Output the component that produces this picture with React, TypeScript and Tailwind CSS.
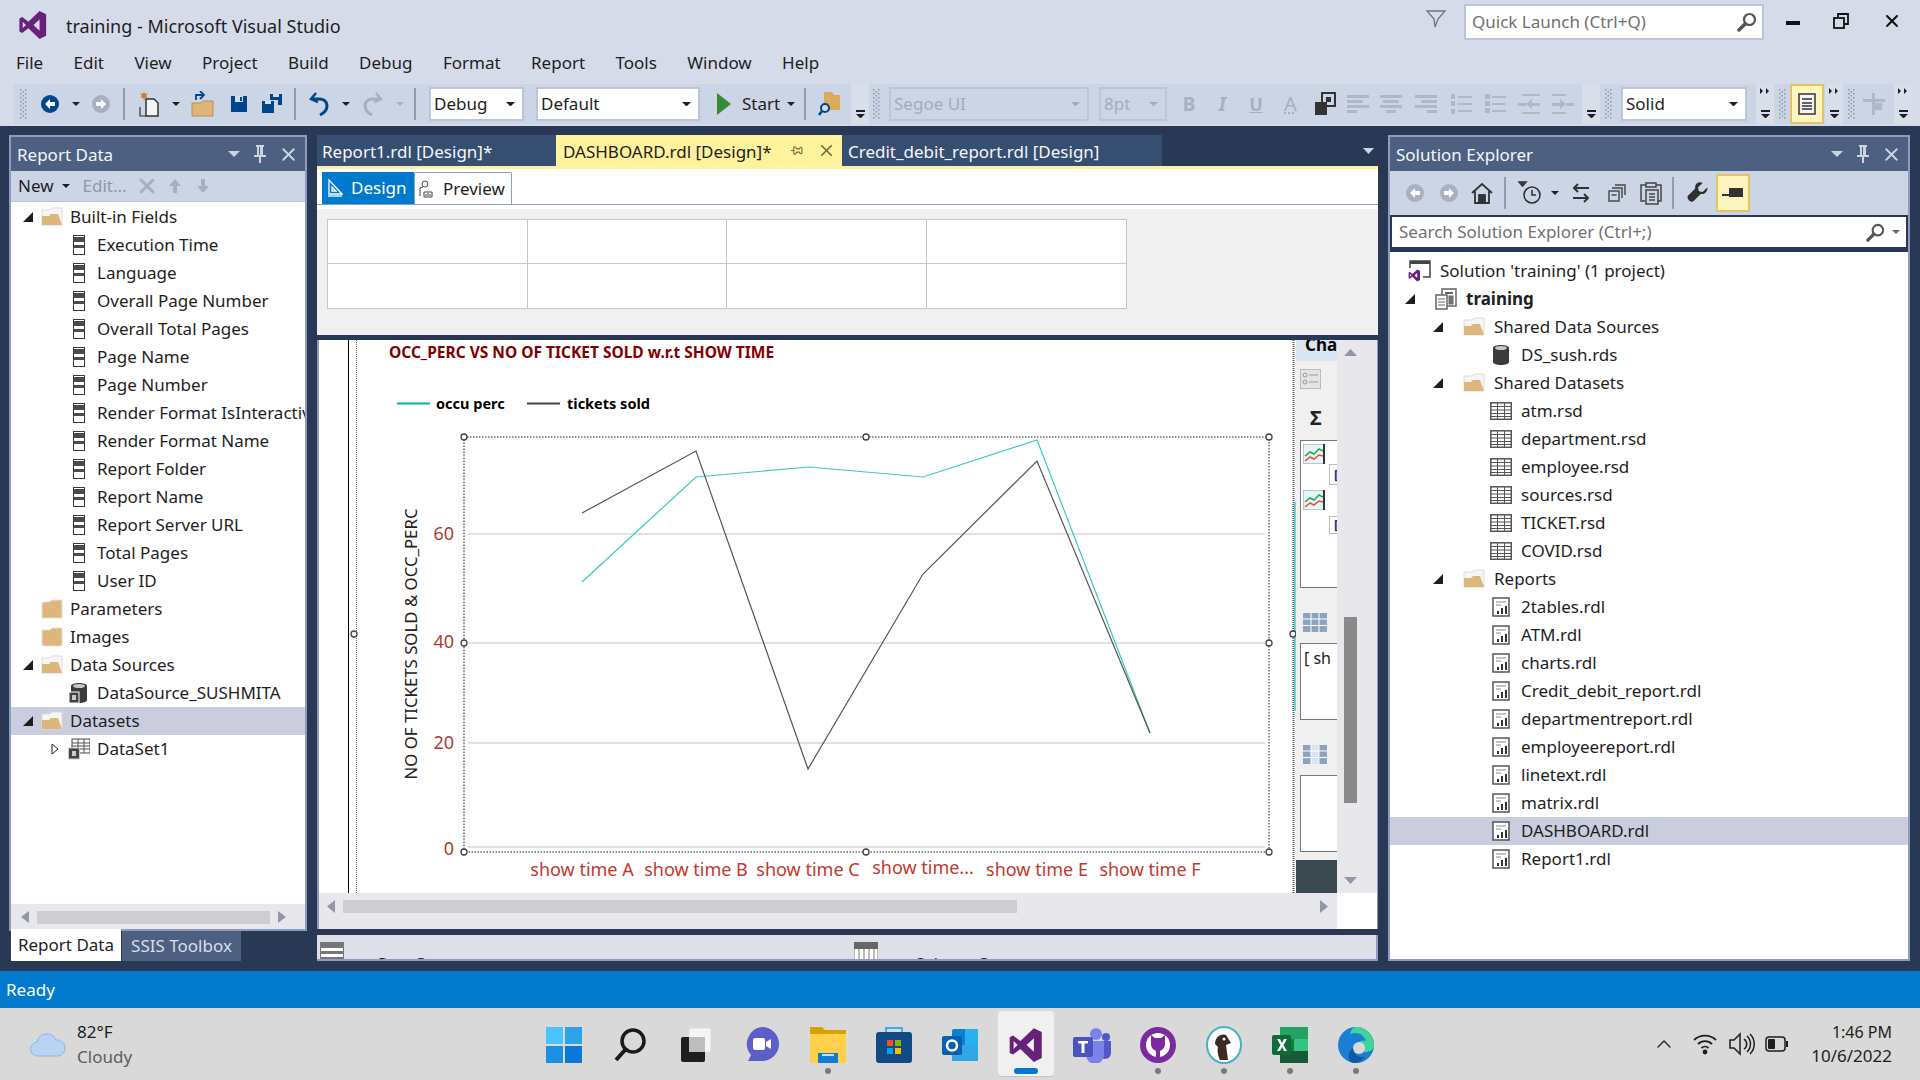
import type { ReactNode } from 'react'
import { X, Pin, ChevronUp } from 'lucide-react'

const font = '"Noto Sans", "Open Sans", sans-serif'

function Caret({ color = '#1e1e1e', size = 8 }: { color?: string; size?: number }) {
  return (
    <svg width={size} height={size / 2} viewBox="0 0 8 4" className="shrink-0">
      <path d="M0 0h8L4 4z" fill={color} />
    </svg>
  )
}

function Magnifier({ size = 20 }: { size?: number }) {
  return (
    <svg width={size} height={size} viewBox="0 0 20 20" fill="none" stroke="#555">
      <circle cx="12.500" cy="7.500" r="5.500" strokeWidth="2.200" />
      <path d="M8 12l-6 6" strokeWidth="3.500" strokeLinecap="round" />
    </svg>
  )
}

function Gripper() {
  return (
    <svg width="8" height="30" viewBox="0 0 8 30" className="shrink-0">
      {[0, 4, 8, 12, 16, 20, 24, 28].map((y) => (
        <g key={y} fill="#8f98ab">
          <rect x="0" y={y} width="1.5" height="1.5" />
          <rect x="5" y={y} width="1.5" height="1.5" />
          <rect x="2.5" y={y + 2} width="1.5" height="1.5" />
        </g>
      ))}
    </svg>
  )
}

function Sep() {
  return <div className="w-[2px] h-[32px] bg-[#8f9bb3] shrink-0" />
}

function Overflow({ double }: { double?: boolean }) {
  return (
    <div className="w-[18px] h-[40px] flex flex-col items-center justify-end pb-[6px] gap-[2px] bg-[#d9deeb] shrink-0">
      {double && (
        <svg width="10" height="6" viewBox="0 0 10 6" className="mb-[14px]">
          <path d="M0 0l3 3-3 3zM6 0l3 3-3 3z" fill="#1e1e1e" />
        </svg>
      )}
      <div className="w-[9px] h-[2px] bg-[#1e1e1e]" />
      <Caret size={9} />
    </div>
  )
}

function Combo({ label, width, disabled }: { label: string; width: string; disabled?: boolean }) {
  return (
    <div
      className={`${width} h-[34px] shrink-0 flex items-center justify-between pl-[3px] pr-[7px] border-2 text-[17px] ${
        disabled ? 'border-[#bcc5d8] bg-[#ccd5e6] text-[#a3abbd]' : 'border-[#bcc5d8] bg-white text-[#1e1e1e]'
      }`}
    >
      <span>{label}</span>
      <Caret color={disabled ? '#a3abbd' : '#1e1e1e'} size={9} />
    </div>
  )
}

function VsLogo({ size = 30, color = '#68217a' }: { size?: number; color?: string }) {
  return (
    <svg width={size} height={size} viewBox="0 0 32 32">
      <path
        fillRule="evenodd"
        d="M23 1l7 3.5v23L23 31 11 19.5 4.5 24.5 1.5 23V9l3-1.500 6.500 5zM23 10l-6.500 6 6.500 6zM5 12.500v7l3.500-3.500z"
        fill={color}
      />
    </svg>
  )
}

function CircleArrow({ dir, color }: { dir: 'l' | 'r'; color: string }) {
  return (
    <svg width="18" height="18" viewBox="0 0 18 18">
      <circle cx="9" cy="9" r="9" fill={color} />
      <path d={dir === 'l' ? 'M9 4L4 9l5 5v-3h5V7H9z' : 'M9 4l5 5-5 5v-3H4V7h5z'} fill="#fff" />
    </svg>
  )
}

function SaveIcon({ all }: { all?: boolean }) {
  return (
    <svg width="22" height="20" viewBox="0 0 22 20">
      {all ? (
        <>
          <path d="M9 0h12v11h-4V6H9z" fill="#00468c" />
          <path d="M1 7h12v12H1z" fill="#00468c" />
          <rect x="4" y="7" width="6" height="3" fill="#d6dbe9" />
          <rect x="12" y="0" width="6" height="3" fill="#d6dbe9" />
        </>
      ) : (
        <>
          <path d="M3 2h16v16H3z" fill="#00468c" />
          <rect x="7" y="2" width="8" height="6" fill="#d6dbe9" />
          <rect x="12" y="3" width="2" height="4" fill="#00468c" />
        </>
      )}
    </svg>
  )
}

function Lines({ kind }: { kind: string }) {
  const rows: Record<string, number[][]> = {
    left: [[0, 22], [0, 16], [0, 22], [0, 10]],
    center: [[0, 22], [3, 16], [0, 22], [6, 10]],
    right: [[0, 22], [6, 16], [0, 22], [12, 10]],
  }
  return (
    <svg width="22" height="22" viewBox="0 0 22 22">
      {rows[kind].map(([x, w], i) => (
        <rect key={i} x={x} y={2 + i * 5} width={w} height="3" fill="#b0b7c6" />
      ))}
    </svg>
  )
}

function Slot({ w, children }: { w: string; children?: ReactNode }) {
  return <div className={`${w} h-[40px] shrink-0 flex items-center justify-center`}>{children}</div>
}

function FormatButtons() {
  return (
    <>
      <Slot w="w-[5px]" />
      <Slot w="w-[34px]"><span className="font-bold text-[19px] text-[#a8afbf]">B</span></Slot>
      <Slot w="w-[33px]"><span className="italic font-bold text-[19px] text-[#a8afbf]">I</span></Slot>
      <Slot w="w-[34px]"><span className="underline font-bold text-[18px] text-[#a8afbf]">U</span></Slot>
      <Slot w="w-[35px]"><span className="underline decoration-dotted text-[20px] text-[#a8afbf]">A</span></Slot>
      <Slot w="w-[33px]">
        <svg width="22" height="24" viewBox="0 0 22 24">
          <rect x="8" y="1" width="13" height="13" fill="none" stroke="#333" strokeWidth="2" />
          <rect x="12" y="5" width="5" height="5" fill="#333" />
          <rect x="1" y="10" width="12" height="13" fill="#333" />
        </svg>
      </Slot>
      <Slot w="w-[33px]"><Lines kind="left" /></Slot>
      <Slot w="w-[34px]"><Lines kind="center" /></Slot>
      <Slot w="w-[36px]"><Lines kind="right" /></Slot>
      <Slot w="w-[34px]">
        <svg width="22" height="22" viewBox="0 0 22 22" fill="#b0b7c6">
          <rect x="8" y="3" width="14" height="2" /><rect x="8" y="10" width="14" height="2" /><rect x="8" y="17" width="14" height="2" />
          <rect x="1" y="1" width="4" height="5" /><rect x="1" y="8" width="4" height="5" /><rect x="1" y="16" width="4" height="5" />
        </svg>
      </Slot>
      <Slot w="w-[34px]">
        <svg width="22" height="22" viewBox="0 0 22 22" fill="#b0b7c6">
          <rect x="8" y="3" width="14" height="2" /><rect x="8" y="10" width="14" height="2" /><rect x="8" y="17" width="14" height="2" />
          <rect x="1" y="1" width="5" height="5" /><rect x="1" y="8" width="5" height="5" /><rect x="1" y="15" width="5" height="5" />
        </svg>
      </Slot>
      <Slot w="w-[34px]">
        <svg width="22" height="22" viewBox="0 0 22 22" fill="#b0b7c6">
          <rect x="4" y="1" width="18" height="2" /><rect x="0" y="10" width="8" height="3" /><rect x="14" y="10" width="8" height="3" />
          <rect x="4" y="19" width="18" height="2" /><path d="M8 11l6-5v10z" />
        </svg>
      </Slot>
      <Slot w="w-[34px]">
        <svg width="22" height="22" viewBox="0 0 22 22" fill="#b0b7c6">
          <rect x="0" y="1" width="14" height="2" /><rect x="0" y="10" width="8" height="3" /><rect x="14" y="10" width="8" height="3" />
          <rect x="0" y="19" width="14" height="2" /><path d="M14 11L8 6v10z" />
        </svg>
      </Slot>
    </>
  )
}

function Toolbar() {
  return (
    <div className="h-[40px] mt-[1px] flex items-center bg-[#ccd5e6] ml-[14px] mr-[9px]">
      <Slot w="w-[19px]"><Gripper /></Slot>
      <Slot w="w-[33px]"><CircleArrow dir="l" color="#00468c" /></Slot>
      <Slot w="w-[20px]"><Caret /></Slot>
      <Slot w="w-[30px]"><CircleArrow dir="r" color="#a8afbf" /></Slot>
      <Slot w="w-[16px]"><Sep /></Slot>
      <Slot w="w-[36px]">
        <svg width="22" height="26" viewBox="0 0 22 26">
          <path d="M7 8h8l4 4v13H7z" fill="#f3f4f7" stroke="#333" strokeWidth="1.500" />
          <path d="M1 16v9h6" fill="none" stroke="#333" strokeWidth="1.200" />
          <path d="M5 0l1 3 3-1-2 3 2 2-3-.500L5 10 4 6.500 1 7l2-2-2-3 3 1z" fill="#c27d1a" />
        </svg>
      </Slot>
      <Slot w="w-[16px]"><Caret /></Slot>
      <Slot w="w-[38px]">
        <svg width="24" height="26" viewBox="0 0 24 26">
          <path d="M1 12h9l2-2h10v15H1z" fill="#dcb67a" stroke="#b5914f" />
          <path d="M5 9V4h7M9 0l4 4-4 4" fill="none" stroke="#00468c" strokeWidth="1.800" />
        </svg>
      </Slot>
      <Slot w="w-[33px]"><SaveIcon /></Slot>
      <Slot w="w-[34px]"><SaveIcon all /></Slot>
      <Slot w="w-[12px]"><Sep /></Slot>
      <Slot w="w-[36px]">
        <svg width="22" height="26" viewBox="0 0 22 26" fill="none">
          <path d="M8 2L3 8l7 3" stroke="#00468c" strokeWidth="2.500" />
          <path d="M4 8h7c6 0 8 4 8 7 0 4-3 7-7 9" stroke="#00468c" strokeWidth="3" />
        </svg>
      </Slot>
      <Slot w="w-[18px]"><Caret /></Slot>
      <Slot w="w-[36px]">
        <svg width="22" height="26" viewBox="0 0 22 26" fill="none">
          <path d="M14 2l5 6-7 3" stroke="#a8afbf" strokeWidth="2.500" />
          <path d="M18 8h-7c-6 0-8 4-8 7 0 4 3 7 7 9" stroke="#a8afbf" strokeWidth="3" />
        </svg>
      </Slot>
      <Slot w="w-[18px]"><Caret color="#a8afbf" /></Slot>
      <Slot w="w-[11px]"><Sep /></Slot>
      <Slot w="w-[9px]" />
      <Combo label="Debug" width="w-[95px]" />
      <Slot w="w-[12px]" />
      <Combo label="Default" width="w-[164px]" />
      <Slot w="w-[12px]" />
      <Slot w="w-[24px]">
        <svg width="14" height="22" viewBox="0 0 14 22"><path d="M0 0l14 11L0 22z" fill="#388a34" /></svg>
      </Slot>
      <div className="w-[44px] text-[17px] text-[#1e1e1e] shrink-0 pl-[6px]">Start</div>
      <Slot w="w-[22px]"><Caret /></Slot>
      <Slot w="w-[6px]"><Sep /></Slot>
      <Slot w="w-[43px]">
        <svg width="24" height="26" viewBox="0 0 24 26">
          <path d="M6 1h8l2 3h6v15H6z" fill="#dcaa5b" />
          <circle cx="7" cy="17" r="4" fill="#d6dbe9" stroke="#00468c" strokeWidth="2" />
          <path d="M4 20l-3 4" stroke="#00468c" strokeWidth="2.500" />
        </svg>
      </Slot>
      <Overflow />
      <Slot w="w-[4px]" />
      <Gripper />
      <Slot w="w-[8px]" />
      <Combo label="Segoe UI" width="w-[200px]" disabled />
      <Slot w="w-[10px]" />
      <Combo label="8pt" width="w-[68px]" disabled />
      <FormatButtons />
      <Slot w="w-[2px]" />
      <Overflow />
      <Slot w="w-[5px]" />
      <Gripper />
      <Slot w="w-[8px]" />
      <Combo label="Solid" width="w-[126px]" />
      <Slot w="w-[9px]" />
      <Overflow double />
      <Slot w="w-[5px]" />
      <Gripper />
      <div className="w-[34px] h-[40px] ml-[3px] border-2 border-[#e5c365] bg-[#fdf4bf] flex items-center justify-center shrink-0">
        <svg width="18" height="22" viewBox="0 0 18 22" fill="none" stroke="#333" strokeWidth="1.500">
          <rect x="1" y="1" width="16" height="20" fill="#f5f5f5" />
          <path d="M4 6h10M4 10h10M4 13h10M4 16h10" />
        </svg>
      </div>
      <div className="w-[1px] shrink-0" />
      <Overflow double />
      <Slot w="w-[5px]" />
      <Gripper />
      <Slot w="w-[36px]">
        <svg width="22" height="22" viewBox="0 0 22 22" fill="#b0b7c6">
          <rect x="0" y="6" width="22" height="3" /><rect x="9" y="0" width="3" height="22" /><rect x="12" y="10" width="7" height="7" />
        </svg>
      </Slot>
      <Slot w="w-[2px]" />
      <Overflow double />
    </div>
  )
}

function FolderOpen() {
  return (
    <svg width="22" height="20" viewBox="0 0 22 20">
      <path d="M1 3h8l2-2h10v17H1z" fill="#f6f6f6" stroke="#e0dccf" />
      <path d="M1 18V9h7l2-2h7l4 11z" fill="#dcb67a" />
    </svg>
  )
}

function FolderClosed() {
  return (
    <svg width="22" height="20" viewBox="0 0 22 20">
      <path d="M1 3h8l2-2h10v18H1z" fill="#dcb67a" stroke="#e8e3d6" />
    </svg>
  )
}

function FieldIcon() {
  return (
    <svg width="12" height="20" viewBox="0 0 12 20">
      <rect x="0.500" y="0.500" width="11" height="19" fill="#fff" stroke="#3b3b3b" />
      <rect x="1" y="2" width="10" height="5" fill="#4b4b4b" />
      <rect x="1" y="10" width="10" height="3" fill="#4b4b4b" />
    </svg>
  )
}

function DbIcon({ small }: { small?: boolean }) {
  return (
    <svg width="20" height="22" viewBox="0 0 20 22">
      <path d="M2 4c0-4 16-4 16 0v14c0 4-16 4-16 0z" fill="#3b3b3b" />
      <ellipse cx="10" cy="4" rx="6" ry="2" fill="#c9c9c9" />
      {small && <rect x="0" y="10" width="10" height="11" fill="#424242" stroke="#fff" />}
      {small && <rect x="3" y="13" width="4" height="5" fill="#c9c9c9" />}
    </svg>
  )
}

function GridIcon() {
  return (
    <svg width="22" height="18" viewBox="0 0 22 18" fill="none" stroke="#555">
      <rect x="0.800" y="0.800" width="20.500" height="16.500" strokeWidth="1.500" fill="#fff" />
      <path d="M1 4.500h20M1 8h20M1 11.500h20M1 14.500h20M7.500 1v16M14.500 1v16" strokeWidth="1" />
    </svg>
  )
}

function DatasetIcon() {
  return (
    <svg width="22" height="22" viewBox="0 0 22 22">
      <rect x="4" y="1" width="18" height="14" fill="#fff" stroke="#444" />
      <path d="M4 5h18M4 8h18M4 11h18M10 1v14M16 1v14" stroke="#555" />
      <rect x="0.500" y="10" width="11" height="11" fill="#444" stroke="#ccc" />
      <rect x="4" y="13" width="4" height="5" fill="#ccc" />
    </svg>
  )
}

function ReportIcon() {
  return (
    <svg width="18" height="20" viewBox="0 0 18 20">
      <rect x="1" y="1" width="16" height="18" fill="#fff" stroke="#555" strokeWidth="1.500" />
      <path d="M4 5h10M4 8h5" stroke="#888" />
      <rect x="5" y="14" width="2" height="3" fill="#333" />
      <rect x="9" y="11" width="2" height="6" fill="#333" />
      <rect x="13" y="9" width="2" height="8" fill="#333" />
    </svg>
  )
}

function ProjectIcon() {
  return (
    <svg width="22" height="22" viewBox="0 0 22 22" fill="#fff" stroke="#666">
      <rect x="7" y="1" width="14" height="17" strokeWidth="1.500" />
      <path d="M10 5h8" strokeWidth="2" />
      <rect x="14" y="8" width="4" height="8" fill="#777" />
      <rect x="1" y="7" width="11" height="14" strokeWidth="1.500" />
      <path d="M3 11h7M3 14h7M3 17h7" />
    </svg>
  )
}

function SolutionIcon() {
  return (
    <svg width="24" height="22" viewBox="0 0 24 22">
      <path d="M2 8V1h20v16h-7" fill="none" stroke="#444" strokeWidth="1.500" />
      <rect x="2" y="1" width="20" height="3" fill="#444" />
      <g transform="translate(0 9) scale(0.400)"><path fillRule="evenodd" d="M23 1l7 3.500v23L23 31 11 19.500 4.500 24.500 1.500 23V9l3-1.500 6.500 5zM23 10l-6.500 6 6.500 6zM5 12.500v7l3.500-3.500z" fill="#68217a" /></g>
    </svg>
  )
}

function Expand({ open, hollow }: { open?: boolean; hollow?: boolean }) {
  if (open) {
    return (
      <svg width="10" height="10" viewBox="0 0 10 10"><path d="M10 0v10H0z" fill="#1e1e1e" /></svg>
    )
  }
  if (hollow) {
    return (
      <svg width="8" height="12" viewBox="0 0 8 12"><path d="M1 1l6 5-6 5z" fill="#fff" stroke="#1e1e1e" /></svg>
    )
  }
  return null
}

function LeftRow({ indent, open, hollow, icon, label, selected }: {
  indent: string; open?: boolean; hollow?: boolean; icon: ReactNode; label: string; selected?: boolean
}) {
  return (
    <div className={`${indent} h-[28px] flex items-center text-[17px] text-[#1e1e1e] whitespace-nowrap ${selected ? 'bg-[#c9cdde]' : ''}`}>
      <div className="w-[12px] flex justify-center shrink-0"><Expand open={open} hollow={hollow} /></div>
      <div className="w-[36px] flex justify-center shrink-0">{icon}</div>
      <span>{label}</span>
    </div>
  )
}

function RightRow({ indent, open, icon, label, selected, bold }: {
  indent: string; open?: boolean; icon: ReactNode; label: string; selected?: boolean; bold?: boolean
}) {
  return (
    <div className={`${indent} h-[28px] flex items-center text-[17px] text-[#1e1e1e] whitespace-nowrap ${selected ? 'bg-[#c9cdde]' : ''} ${bold ? 'font-bold' : ''}`}>
      <div className="w-[12px] flex justify-center shrink-0"><Expand open={open} /></div>
      <div className="w-[10px] shrink-0" />
      <div className="w-[40px] flex justify-center shrink-0">{icon}</div>
      <span>{label}</span>
    </div>
  )
}

function PanelTitle({ title }: { title: string }) {
  return (
    <div className="h-[34px] bg-[#4d6082] flex items-center text-[#f4f6fa] text-[17px] pl-[6px] shrink-0">
      <span className="flex-1 pt-[2px]">{title}</span>
      <svg width="12" height="6" viewBox="0 0 12 6" className="mr-[14px]"><path d="M0 0h12L6 6z" fill="#ced4dd" /></svg>
      <svg width="12" height="18" viewBox="0 0 12 18" fill="#ced4dd" className="mr-[12px]">
        <path d="M2 0h8v2H9v8h3v2H7v6H5v-6H0v-2h3V2H2zM5 2v8h1V2z" fillRule="evenodd" />
      </svg>
      <X size={21} strokeWidth={2.200} className="text-[#ced4dd] mr-[6px]" />
    </div>
  )
}

const fields = [
  'Execution Time', 'Language', 'Overall Page Number', 'Overall Total Pages', 'Page Name', 'Page Number',
  'Render Format IsInteractive', 'Render Format Name', 'Report Folder', 'Report Name', 'Report Server URL',
  'Total Pages', 'User ID',
]

function ReportDataPanel() {
  return (
    <div className="w-[298px] shrink-0 flex flex-col">
      <div className="flex-1 min-h-0 border-x-2 border-t-2 border-[#8e9bbc] flex flex-col">
        <PanelTitle title="Report Data" />
        <div className="h-[31px] bg-[#ccd5e6] flex items-center shrink-0 text-[17px] border-b border-[#b9c3d6]">
          <span className="ml-[7px] text-[#1e1e1e]">New</span>
          <span className="ml-[8px]"><Caret size={8} /></span>
          <span className="ml-[13px] text-[#8f97a8]">Edit...</span>
          <X size={24} strokeWidth={3} className="text-[#a8afbf] ml-[8px]" />
          <svg width="14" height="16" viewBox="0 0 14 16" className="ml-[9px]"><path d="M7 1L1 8h4v7h4V8h4z" fill="#a8afbf" /></svg>
          <svg width="14" height="16" viewBox="0 0 14 16" className="ml-[14px]"><path d="M7 15L1 8h4V1h4v7h4z" fill="#a8afbf" /></svg>
        </div>
        <div className="flex-1 bg-white overflow-hidden pt-[1px]">
          <LeftRow indent="pl-[11px]" open icon={<FolderOpen />} label="Built-in Fields" />
          {fields.map((f) => (
            <LeftRow key={f} indent="pl-[38px]" icon={<FieldIcon />} label={f} />
          ))}
          <LeftRow indent="pl-[11px]" icon={<FolderClosed />} label="Parameters" />
          <LeftRow indent="pl-[11px]" icon={<FolderClosed />} label="Images" />
          <LeftRow indent="pl-[11px]" open icon={<FolderOpen />} label="Data Sources" />
          <LeftRow indent="pl-[38px]" icon={<DbIcon small />} label="DataSource_SUSHMITA" />
          <LeftRow indent="pl-[11px]" open icon={<FolderOpen />} label="Datasets" selected />
          <LeftRow indent="pl-[38px]" hollow icon={<DatasetIcon />} label="DataSet1" />
        </div>
        <div className="h-[26px] bg-[#e8e8ec] flex items-center shrink-0 px-[10px] gap-[8px]">
          <svg width="8" height="12" viewBox="0 0 8 12"><path d="M8 0v12L0 6z" fill="#9097a8" /></svg>
          <div className="w-[233px] h-[13px] bg-[#cdced3]" />
          <svg width="8" height="12" viewBox="0 0 8 12"><path d="M0 0v12l8-6z" fill="#9097a8" /></svg>
        </div>
      </div>
      <div className="h-[32px] flex shrink-0 text-[17px] border-t-2 border-[#8e9bbc] -mt-[1px]">
        <div className="ml-[2px] w-[110px] bg-white text-[#1e1e1e] flex items-center justify-center -mt-[2px] h-[32px]">Report Data</div>
        <div className="ml-[1px] w-[119px] bg-[#4d6082] text-[#d8dfea] flex items-center justify-center">SSIS Toolbox</div>
      </div>
    </div>
  )
}

function SolutionToolbar() {
  return (
    <div className="h-[44px] bg-[#ccd5e6] flex items-center shrink-0">
      <div className="w-[8px]" />
      <Slot w="w-[34px]"><CircleArrow dir="l" color="#a8afbf" /></Slot>
      <Slot w="w-[34px]"><CircleArrow dir="r" color="#a8afbf" /></Slot>
      <Slot w="w-[32px]">
        <svg width="22" height="22" viewBox="0 0 22 22" fill="none" stroke="#333" strokeWidth="1.800">
          <path d="M1 11L11 2l10 9M4 9v12h14V9" /><rect x="8" y="13" width="6" height="8" fill="#333" />
        </svg>
      </Slot>
      <Slot w="w-[14px]"><div className="w-[2px] h-[32px] bg-[#8f9bb3]" /></Slot>
      <Slot w="w-[36px]">
        <svg width="24" height="24" viewBox="0 0 24 24" fill="none" stroke="#333" strokeWidth="1.600">
          <path d="M1 1h7L4.500 5z" fill="#444" /><circle cx="14" cy="14" r="8" /><path d="M14 9v5h4" />
        </svg>
      </Slot>
      <Slot w="w-[14px]"><Caret /></Slot>
      <Slot w="w-[38px]">
        <svg width="20" height="20" viewBox="0 0 20 20" fill="none" stroke="#333" strokeWidth="2">
          <path d="M18 5H3M7 1L3 5l4 4M2 15h15M13 11l4 4-4 4" />
        </svg>
      </Slot>
      <Slot w="w-[34px]">
        <svg width="18" height="18" viewBox="0 0 18 18" fill="none" stroke="#444" strokeWidth="1.400">
          <rect x="1" y="7" width="10" height="10" /><path d="M3.500 11h5" /><path d="M4 4h10v10M7 1h10v10" />
        </svg>
      </Slot>
      <Slot w="w-[33px]">
        <svg width="22" height="24" viewBox="0 0 22 24" fill="none" stroke="#444" strokeWidth="1.500">
          <path d="M5 20H1V4h5M16 4h5v16h-4" /><rect x="6" y="2" width="10" height="4" /><rect x="6" y="9" width="12" height="14" /><path d="M9 13h6M9 16h6M9 19h6" />
        </svg>
      </Slot>
      <Slot w="w-[12px]"><div className="w-[2px] h-[32px] bg-[#8f9bb3]" /></Slot>
      <div className="w-[37px] h-[40px] flex items-center justify-center shrink-0">
        <svg width="22" height="22" viewBox="0 0 24 24"><path d="M22 6l-5 5-4-1-1-4 5-5c-4-2-9 1-8 6L1 15c-2 3 3 8 6 6l8-8c5 1 8-4 7-7z" fill="#2f2f2f" /></svg>
      </div>
      <div className="w-[34px] h-[38px] border-2 border-[#e5c365] bg-[#fdf4bf] flex items-center justify-center shrink-0">
        <svg width="24" height="12" viewBox="0 0 24 12"><rect x="8" y="1" width="14" height="9" fill="#333" /><rect x="1" y="7" width="8" height="2" fill="#333" /></svg>
      </div>
    </div>
  )
}

const datasets = ['atm.rsd', 'department.rsd', 'employee.rsd', 'sources.rsd', 'TICKET.rsd', 'COVID.rsd']
const reports = [
  '2tables.rdl', 'ATM.rdl', 'charts.rdl', 'Credit_debit_report.rdl', 'departmentreport.rdl', 'employeereport.rdl',
  'linetext.rdl', 'matrix.rdl', 'DASHBOARD.rdl', 'Report1.rdl',
]

function SolutionPanel() {
  return (
    <div className="w-[522px] shrink-0 border-x-2 border-y-2 border-[#8e9bbc] flex flex-col">
      <PanelTitle title="Solution Explorer" />
      <SolutionToolbar />
      <div className="h-[30px] mt-[2px] mx-[2px] mb-[5px] bg-white flex items-center text-[17px] text-[#717171] pl-[7px] pr-[6px] shrink-0">
        <span className="flex-1">Search Solution Explorer (Ctrl+;)</span>
        <span className="mr-[7px]"><Magnifier size={19} /></span>
        <Caret color="#666" size={8} />
      </div>
      <div className="flex-1 bg-white overflow-hidden pt-[5px]">
        <div className="h-[28px] flex items-center text-[17px] text-[#1e1e1e]">
          <div className="w-[50px] flex justify-end pr-[8px]"><SolutionIcon /></div>
          <span>Solution 'training' (1 project)</span>
        </div>
        <RightRow indent="pl-[14px]" open bold icon={<ProjectIcon />} label="training" />
        <RightRow indent="pl-[42px]" open icon={<FolderOpen />} label="Shared Data Sources" />
        <RightRow indent="pl-[69px]" icon={<DbIcon />} label="DS_sush.rds" />
        <RightRow indent="pl-[42px]" open icon={<FolderOpen />} label="Shared Datasets" />
        {datasets.map((d) => <RightRow key={d} indent="pl-[69px]" icon={<GridIcon />} label={d} />)}
        <RightRow indent="pl-[42px]" open icon={<FolderOpen />} label="Reports" />
        {reports.map((r) => (
          <RightRow key={r} indent="pl-[69px]" icon={<ReportIcon />} label={r} selected={r === 'DASHBOARD.rdl'} />
        ))}
      </div>
    </div>
  )
}

const gray = '583,513 697,451 809,769 924,574 1038,461 1151,733'
const teal = '583,582 697,477 810,467 924,477 1038,440 1151,733'
const xLabels = [
  { x: 583, y: 876, t: 'show time A' },
  { x: 697, y: 876, t: 'show time B' },
  { x: 809, y: 876, t: 'show time C' },
  { x: 924, y: 874, t: 'show  time...' },
  { x: 1038, y: 876, t: 'show time E' },
  { x: 1151, y: 876, t: 'show time F' },
]

function Chart() {
  const handles = [[465, 437], [867, 437], [1270, 437], [465, 643], [1270, 643], [465, 852], [867, 852], [1270, 852], [355, 634], [1294, 634]]
  return (
    <svg viewBox="320 340 977 553" width="977" height="553" className="block shrink-0" style={{ fontFamily: font }}>
      <rect x="320" y="340" width="977" height="553" fill="#fff" />
      <line x1="349.500" y1="340" x2="349.500" y2="893" stroke="#000" />
      <line x1="357.500" y1="340" x2="357.500" y2="893" stroke="#666" strokeDasharray="1 1" />
      <line x1="1294.500" y1="340" x2="1294.500" y2="893" stroke="#555" strokeWidth="2" strokeDasharray="1 1" />
      <line x1="1296" y1="502" x2="1296" y2="711" stroke="#3cc" strokeWidth="1.500" />
      <text x="390" y="358" fontSize="15.500" fontWeight="700" fill="#800000">OCC_PERC VS NO OF TICKET SOLD w.r.t SHOW TIME</text>
      <line x1="398" y1="403.500" x2="431" y2="403.500" stroke="#00b5ad" strokeWidth="2" />
      <text x="437" y="409" fontSize="14.500" fontWeight="700" fill="#000">occu perc</text>
      <line x1="528" y1="403.500" x2="561" y2="403.500" stroke="#444" strokeWidth="2" />
      <text x="568" y="409" fontSize="14.500" fontWeight="700" fill="#000">tickets sold</text>
      <text transform="translate(418 644) rotate(-90)" textAnchor="middle" fontSize="16.800" fill="#222">NO OF TICKETS SOLD &amp; OCC_PERC</text>
      {[534, 643, 743, 847].map((y) => (
        <line key={y} x1="469" y1={y} x2="1266" y2={y} stroke="#e2e2e2" strokeWidth="2" />
      ))}
      {[[60, 540], [40, 648], [20, 749], [0, 855]].map(([v, y]) => (
        <text key={v} x="455" y={y} textAnchor="end" fontSize="18" fill="#b03a2e">{v}</text>
      ))}
      <rect x="465" y="437" width="805" height="415" fill="none" stroke="#666" strokeWidth="1.500" strokeDasharray="1.500 1.500" />
      <polyline points={teal} fill="none" stroke="#3ac8c0" strokeWidth="1.200" />
      <polyline points={gray} fill="none" stroke="#555" strokeWidth="1.200" />
      {handles.map(([x, y]) => (
        <circle key={`${x}-${y}`} cx={x} cy={y} r="3" fill="#fff" stroke="#444" strokeWidth="1.300" />
      ))}
      {xLabels.map((l) => (
        <text key={l.x} x={l.x} y={l.y} textAnchor="middle" fontSize="18" fill="#c0392b">{l.t}</text>
      ))}
    </svg>
  )
}

function LineChip() {
  return (
    <svg width="22" height="20" viewBox="0 0 22 20" className="shrink-0">
      <rect x="0" y="0" width="22" height="20" fill="#e6f4fb" stroke="#999" />
      <path d="M2 12l5-4 4 2 5-5 4 2" fill="none" stroke="#2aa84a" strokeWidth="1.500" />
      <path d="M2 17l5-4 4 2 5-4 4 1" fill="none" stroke="#e0553a" strokeWidth="1.500" />
      <rect x="20" y="0" width="2" height="20" fill="#333" />
    </svg>
  )
}

function GroupIcon({ middle }: { middle?: boolean }) {
  return (
    <svg width="24" height="19" viewBox="0 0 24 19">
      <rect width="24" height="19" fill="#8aa3bf" />
      <path d="M0 6h24M0 12.500h24M8 0v19M16 0v19" stroke="#fff" />
      {middle && <rect x="8" y="0" width="8" height="19" fill="#fff" opacity="0.700" />}
    </svg>
  )
}

function ChartDataPane() {
  return (
    <div className="w-[41px] shrink-0 overflow-hidden bg-[#f0f0f0] flex flex-col">
      <div className="h-[21px] bg-[#d8e6f2] text-[17px] font-bold text-black leading-[9px] pl-[9px] whitespace-nowrap shrink-0">Cha</div>
      <div className="h-[35px] flex items-center pl-[4px] shrink-0">
        <svg width="21" height="20" viewBox="0 0 21 20" className="shrink-0">
          <rect x="0.500" y="0.500" width="20" height="19" fill="#e4e4e4" stroke="#bbb" />
          <circle cx="5" cy="6" r="2" fill="none" stroke="#999" />
          <circle cx="5" cy="13" r="2" fill="none" stroke="#999" />
          <path d="M9 6h9M9 13h9" stroke="#999" />
        </svg>
      </div>
      <div className="h-[44px] pl-[14px] flex items-center text-[20px] font-bold text-[#222] shrink-0">Σ</div>
      <div className="h-[148px] ml-[4px] border border-[#777] bg-white pt-[3px] pl-[2px] w-[60px] shrink-0">
        <LineChip />
        <div className="h-[21px] w-[20px] ml-[26px] border border-[#bbb] bg-white text-[13px] leading-[18px] pl-[4px] text-[#1c2a6b] font-bold">[</div>
        <div className="h-[5px]" />
        <LineChip />
        <div className="h-[6px]" />
        <div className="h-[18px] w-[20px] ml-[26px] border border-[#bbb] bg-white text-[13px] leading-[15px] pl-[4px] text-[#1c2a6b] font-bold">[</div>
      </div>
      <div className="h-[55px] pl-[7px] pb-[11px] flex items-end shrink-0"><GroupIcon /></div>
      <div className="h-[77px] ml-[4px] border border-[#777] bg-white w-[60px] shrink-0 text-[16px] pl-[3px] pt-[2px] text-[#222] whitespace-nowrap">[ sh</div>
      <div className="h-[55px] pl-[7px] pb-[11px] flex items-end shrink-0"><GroupIcon middle /></div>
      <div className="h-[77px] ml-[4px] border border-[#777] bg-white w-[60px] shrink-0" />
      <div className="flex-1 mt-[8px] bg-[#3b4a50]" />
    </div>
  )
}

function DocumentPanel() {
  return (
    <div className="w-[1061px] shrink-0 flex flex-col">
      <div className="h-[31px] flex items-stretch text-[17px] shrink-0">
        <div className="w-[239px] bg-[#364e6f] text-[#f4f6fa] flex items-center pl-[5px] pt-[2px]">Report1.rdl [Design]*</div>
        <div className="w-[286px] bg-[#fff29d] text-[#1e1e1e] flex items-center pl-[7px]">
          <span className="flex-1 pt-[2px]">DASHBOARD.rdl [Design]*</span>
          <Pin size={13} className="text-[#76663c] rotate-90 mr-[14px]" />
          <X size={19} strokeWidth={2} className="text-[#76663c] mr-[6px]" />
        </div>
        <div className="w-[320px] bg-[#364e6f] text-[#f4f6fa] flex items-center pl-[6px] pt-[2px]">Credit_debit_report.rdl [Design]</div>
        <div className="flex-1 flex items-center justify-end pr-[4px]">
          <svg width="11" height="6" viewBox="0 0 11 6"><path d="M0 0h11L5.500 6z" fill="#ced4dd" /></svg>
        </div>
      </div>
      <div className="h-[3px] bg-[#fff29d] shrink-0" />
      <div className="h-[36px] bg-white border-b border-[#8aa1bb] flex items-end pl-[5px] text-[17px] shrink-0">
        <div className="w-[92px] h-[32px] bg-[#007acc] text-white flex items-center pl-[5px] gap-[8px]">
          <svg width="16" height="18" viewBox="0 0 16 18" fill="none" stroke="#fff" strokeWidth="1.300">
            <path d="M2 1v14h13zM5 8v4h4z" /><path d="M1 17h14" />
          </svg>
          <span>Design</span>
        </div>
        <div className="w-[98px] h-[32px] bg-white border-x border-t border-[#8aa1bb] rounded-t-[2px] text-[#1e1e1e] flex items-center pl-[3px] gap-[9px]">
          <svg width="16" height="18" viewBox="0 0 16 18" fill="none" stroke="#444">
            <circle cx="7" cy="4" r="3" /><path d="M2 16V8l3-1M6 12h8v5H6z" /><path d="M8 16v-2M10 16v-3M12 16v-2" />
          </svg>
          <span>Preview</span>
        </div>
      </div>
      <div className="h-[4px] bg-white shrink-0" />
      <div className="h-[126px] bg-[#f0f0f0] pl-[10px] pt-[10px] shrink-0">
        <div className="w-[800px] h-[90px] bg-white border border-[#c8c8c8] grid grid-cols-4 grid-rows-2">
          {Array.from({ length: 8 }).map((_, i) => (
            <div key={i} className={`border-[#c8c8c8] ${i % 4 !== 3 ? 'border-r' : ''} ${i < 4 ? 'border-b' : ''}`} />
          ))}
        </div>
      </div>
      <div className="h-[5px] bg-[#293955] shrink-0" />
      <div className="h-[553px] flex shrink-0 pl-[2px] bg-[#8e9bbc] pr-[1px]">
        <Chart />
        <ChartDataPane />
        <div className="flex-1 bg-[#e8e8ec] relative flex flex-col items-start pl-[7px] justify-between py-[9px]">
          <svg width="13" height="7" viewBox="0 0 13 7"><path d="M0 7h13L6.500 0z" fill="#9097a8" /></svg>
          <div className="absolute top-[277px] left-[7px] w-[13px] h-[186px] bg-[#8a8a8a]" />
          <svg width="13" height="7" viewBox="0 0 13 7"><path d="M0 0h13L6.500 7z" fill="#9097a8" /></svg>
        </div>
      </div>
      <div className="h-[36px] flex shrink-0 pl-[2px] pr-[1px] bg-[#8e9bbc]">
        <div className="flex-1 bg-[#e8e8ec] flex items-start pt-[7px] pl-[8px] pr-[9px] gap-[8px]">
          <svg width="8" height="13" viewBox="0 0 8 13"><path d="M8 0v13L0 6.500z" fill="#9097a8" /></svg>
          <div className="w-[674px] h-[13px] bg-[#cdced3]" />
          <div className="flex-1" />
          <svg width="8" height="13" viewBox="0 0 8 13"><path d="M0 0v13l8-6.500z" fill="#9097a8" /></svg>
        </div>
        <div className="w-[40px] bg-white" />
      </div>
      <div className="h-[6px] bg-[#293955] shrink-0" />
      <div className="flex-1 min-h-0 bg-[#dde0e9] flex items-start text-[16px] text-[#222] overflow-hidden border-b-2 border-r-2 border-[#8e9bbc] pl-[3px]">
        <svg width="24" height="24" viewBox="0 0 24 24" className="mt-[7px] shrink-0">
          <rect width="24" height="24" fill="#777" />
          <rect x="1" y="6" width="22" height="3" fill="#fff" /><rect x="1" y="12" width="22" height="3" fill="#fff" /><rect x="1" y="18" width="22" height="3" fill="#fff" />
        </svg>
        <span className="ml-[34px] mt-[17px] whitespace-nowrap">Row Groups</span>
        <svg width="24" height="24" viewBox="0 0 24 24" className="mt-[7px] ml-[385px] shrink-0">
          <rect width="24" height="24" fill="#fff" stroke="#777" />
          <rect width="24" height="7" fill="#666" />
          <path d="M5 7v17M10 7v17M15 7v17M20 7v17" stroke="#777" />
        </svg>
        <span className="ml-[36px] mt-[17px] whitespace-nowrap">Column Groups</span>
      </div>
    </div>
  )
}

function TaskIcon({ children, dot, active }: { children: ReactNode; dot?: boolean; active?: boolean }) {
  return (
    <div className="w-[66px] h-[72px] shrink-0 flex flex-col items-center relative">
      {active && <div className="absolute top-[3px] left-[5px] w-[56px] h-[66px] rounded-[4px] bg-[#f0f0f0] border-b border-[#c4c4c4]" />}
      <div className="relative h-[36px] mt-[19px] flex items-center justify-center">{children}</div>
      {dot && <div className="absolute top-[60px] w-[6px] h-[6px] rounded-full bg-[#7a7a7a]" />}
      {active && <div className="absolute top-[60px] w-[24px] h-[6px] rounded-full bg-[#0078d4]" />}
    </div>
  )
}

function Taskbar() {
  return (
    <div className="h-[72px] bg-[#d9d9d9] flex items-center shrink-0 text-[#1e1e1e]" style={{ fontFamily: font }}>
      <div className="w-[531px] shrink-0 flex items-center pl-[30px] gap-[11px]">
        <svg width="36" height="26" viewBox="0 0 36 26">
          <path d="M8 25a7 7 0 0 1-1-14 10 10 0 0 1 19-2 8 8 0 0 1 2 16z" fill="#b9d3f4" stroke="#8fb5ea" />
        </svg>
        <div className="leading-[25px] text-[17px]">
          <div>82°F</div>
          <div className="text-[#5e5e5e]">Cloudy</div>
        </div>
      </div>
      <TaskIcon>
        <svg width="36" height="36" viewBox="0 0 36 36">
          <rect width="17" height="17" fill="#4cc2ff" /><rect x="19" width="17" height="17" fill="#2ba3ea" />
          <rect y="19" width="17" height="17" fill="#1a90e2" /><rect x="19" y="19" width="17" height="17" fill="#0a78d6" />
        </svg>
      </TaskIcon>
      <TaskIcon>
        <svg width="34" height="34" viewBox="0 0 34 34" fill="none" stroke="#1a1a1a">
          <circle cx="20" cy="13" r="11" strokeWidth="3.500" /><path d="M12 22L3 32" strokeWidth="4" />
        </svg>
      </TaskIcon>
      <TaskIcon>
        <svg width="30" height="34" viewBox="0 0 30 34">
          <rect x="8" y="0" width="22" height="24" rx="2" fill="#f5f5f5" stroke="#ddd" />
          <rect x="0" y="9" width="24" height="25" rx="2" fill="#1e1e1e" />
          <rect x="8" y="9" width="16" height="15" fill="#bdbdbd" />
        </svg>
      </TaskIcon>
      <TaskIcon>
        <svg width="34" height="36" viewBox="0 0 34 36">
          <path d="M17 0a17 17 0 0 1 0 34H3l3-6A17 17 0 0 1 17 0z" fill="#5b5fc7" />
          <rect x="8" y="11" width="12" height="12" rx="2" fill="#fff" /><path d="M21 15l5-3v10l-5-3z" fill="#fff" />
        </svg>
      </TaskIcon>
      <TaskIcon dot>
        <svg width="36" height="36" viewBox="0 0 36 36">
          <path d="M0 0h12l3 3h21v33H0z" fill="#ffd04c" /><path d="M0 0h12l3 3h21v4H0z" fill="#d9a100" />
          <path d="M8 36V26h20v10z" fill="#0f7fd4" /><rect x="12" y="27" width="12" height="2" fill="#bfe4ff" />
        </svg>
      </TaskIcon>
      <TaskIcon>
        <svg width="36" height="36" viewBox="0 0 36 36">
          <path d="M10 6V1h16v5" fill="none" stroke="#2bb6ee" strokeWidth="2" />
          <rect y="5" width="36" height="31" rx="3" fill="#124a86" />
          <rect x="11" y="13" width="6" height="6" fill="#f25022" /><rect x="19" y="13" width="6" height="6" fill="#7fba00" />
          <rect x="11" y="21" width="6" height="6" fill="#00a4ef" /><rect x="19" y="21" width="6" height="6" fill="#ffb900" />
        </svg>
      </TaskIcon>
      <TaskIcon>
        <svg width="36" height="36" viewBox="0 0 36 36">
          <rect x="10" y="2" width="26" height="32" rx="2" fill="#0f7fd4" /><rect x="23" y="2" width="13" height="16" fill="#29b0ef" />
          <rect x="10" y="18" width="26" height="16" fill="#33a6e8" />
          <rect x="0" y="9" width="20" height="19" rx="2" fill="#0a5fb3" />
          <circle cx="10" cy="18.500" r="5" fill="none" stroke="#fff" strokeWidth="2.500" />
        </svg>
      </TaskIcon>
      <TaskIcon active>
        <VsLogo size={36} />
      </TaskIcon>
      <TaskIcon>
        <svg width="38" height="36" viewBox="0 0 38 36">
          <circle cx="23" cy="7" r="6" fill="#7b83eb" /><circle cx="33" cy="10" r="4" fill="#5059c9" />
          <path d="M26 14h12v12a6 6 0 0 1-12 0z" fill="#5059c9" /><path d="M13 14h18v14a9 9 0 0 1-18 0z" fill="#7b83eb" />
          <rect y="10" width="20" height="20" rx="2" fill="#4b53bc" />
          <path d="M5 14h10v2.500h-3.500V26h-3v-9.500H5z" fill="#fff" />
        </svg>
      </TaskIcon>
      <TaskIcon dot>
        <svg width="36" height="36" viewBox="0 0 36 36">
          <circle cx="18" cy="18" r="18" fill="#7b2aa0" /><circle cx="18" cy="18" r="12" fill="#fff" />
          <path d="M11 8l4 3h6l4-3v9c0 4-3 6-5 7v6h-4v-6c-2-1-5-3-5-7z" fill="#7b2aa0" />
        </svg>
      </TaskIcon>
      <TaskIcon dot>
        <svg width="36" height="38" viewBox="0 0 36 38">
          <ellipse cx="18" cy="19" rx="17" ry="18" fill="#fff" stroke="#43b3bd" strokeWidth="2" />
          <path d="M9 18c0-7 6-11 11-9l5 8-5 2 2 15h-8c-2-4-3-10-2-13z" fill="#3a2a22" />
          <circle cx="18" cy="13" r="1.500" fill="#fff" />
        </svg>
      </TaskIcon>
      <TaskIcon dot>
        <svg width="36" height="36" viewBox="0 0 36 36">
          <rect x="8" width="28" height="12" fill="#21a366" /><rect x="8" y="12" width="14" height="12" fill="#107c41" /><rect x="22" y="12" width="14" height="12" fill="#33c481" />
          <rect x="8" y="24" width="28" height="12" fill="#185c37" />
          <rect y="8" width="19" height="20" rx="2" fill="#0f6b3a" />
          <path d="M5 12h3l2 4 2-4h3l-3.500 6 3.500 6h-3l-2-4-2 4H5l3.500-6z" fill="#fff" />
        </svg>
      </TaskIcon>
      <TaskIcon dot>
        <svg width="36" height="38" viewBox="0 0 36 38">
          <circle cx="18" cy="19" r="18" fill="#1a7fd4" />
          <path d="M18 1a18 18 0 0 1 18 18c0 5-4 7-9 7-4 0-8-3-8-6s4-7 9-5c-2-6-8-10-16-7 1-4 3-7 6-7z" fill="#3fd59a" />
          <circle cx="21" cy="22" r="6" fill="#d9d9d9" />
          <path d="M15 22c0 6 5 10 12 9-3 3-6 6-10 6-7 0-9-9-2-15z" fill="#0c59a4" />
        </svg>
      </TaskIcon>
      <div className="flex-1 flex items-center justify-end pr-[28px]">
        <ChevronUp size={24} strokeWidth={1.300} className="mr-[17px]" />
        <svg width="24" height="24" viewBox="0 0 24 24" fill="none" stroke="#1e1e1e" strokeWidth="1.800" className="mr-[12px]">
          <path d="M1 8a16 16 0 0 1 22 0M5 12a10 10 0 0 1 14 0M8.500 16a5 5 0 0 1 7 0" /><circle cx="12" cy="20" r="1.500" fill="#1e1e1e" />
        </svg>
        <svg width="26" height="24" viewBox="0 0 26 24" fill="none" stroke="#1e1e1e" strokeWidth="1.500" className="mr-[10px]">
          <path d="M1 8h4l6-6v20l-6-6H1z" /><path d="M15 7a6 6 0 0 1 0 10M18 4a11 11 0 0 1 0 16M21 2a14 14 0 0 1 0 20" />
        </svg>
        <svg width="24" height="16" viewBox="0 0 24 16" className="mr-[22px]">
          <rect x="1" y="1" width="19" height="14" rx="3" fill="none" stroke="#1e1e1e" strokeWidth="1.500" />
          <rect x="3" y="3" width="7" height="10" rx="1" fill="#1e1e1e" /><rect x="21" y="5" width="2" height="6" fill="#1e1e1e" />
        </svg>
        <div className="text-right leading-[24px]">
          <div className="text-[16px]">1:46 PM</div>
          <div className="text-[17px]">10/6/2022</div>
        </div>
      </div>
    </div>
  )
}

export default function App() {
  return (
    <div className="w-[1920px] h-[1080px] flex flex-col overflow-hidden bg-[#293955]" style={{ fontFamily: font }}>
      {/* title bar, menu, toolbar */}
      <div className="h-[126px] bg-[#d6dbe9] flex flex-col shrink-0">
        <div className="h-[42px] flex items-center shrink-0">
          <div className="ml-[18px] mt-[8px]"><VsLogo /></div>
          <div className="ml-[18px] mt-[10px] text-[18px] text-[#1e1e1e] flex-1">training - Microsoft Visual Studio</div>
          <svg width="20" height="20" viewBox="0 0 20 20" fill="none" stroke="#6d7280" strokeWidth="1.300" className="mr-[18px] -mt-[4px]">
            <path d="M1 2h18l-7 8-3 8-1-8z" />
          </svg>
          <div className="w-[300px] h-[36px] mt-[1px] bg-white border-2 border-[#bcc5d8] flex items-center justify-between pl-[6px] pr-[5px] text-[17px] text-[#717171]">
            <span>Quick Launch (Ctrl+Q)</span>
            <Magnifier />
          </div>
          <div className="w-[156px] flex items-center justify-around pl-[6px] pr-[2px]">
            <div className="w-[14px] h-[4px] bg-[#111] mt-[4px]" />
            <svg width="16" height="16" viewBox="0 0 16 16" fill="none" stroke="#111" strokeWidth="1.800"><rect x="1" y="5" width="10" height="10" /><path d="M5 4V1h10v10h-3" /></svg>
            <X size={20} strokeWidth={2.500} className="text-[#111]" />
          </div>
        </div>
        <div className="h-[41px] flex items-center pl-[6px] pt-[1px] text-[17px] text-[#1e1e1e] shrink-0">
          {['File', 'Edit', 'View', 'Project', 'Build', 'Debug', 'Format', 'Report', 'Tools', 'Window', 'Help'].map((m) => (
            <span key={m} className="px-[10px] mr-[10.400px]">{m}</span>
          ))}
        </div>
        <Toolbar />
      </div>

      {/* panels */}
      <div className="flex-1 min-h-0 flex pt-[9px] pb-[10px] pl-[9px] gap-[10px]">
        <ReportDataPanel />
        <DocumentPanel />
        <SolutionPanel />
      </div>

      <div className="h-[37px] bg-[#027acd] text-white text-[17px] flex items-center pl-[6px] shrink-0">Ready</div>
      <Taskbar />
    </div>
  )
}
